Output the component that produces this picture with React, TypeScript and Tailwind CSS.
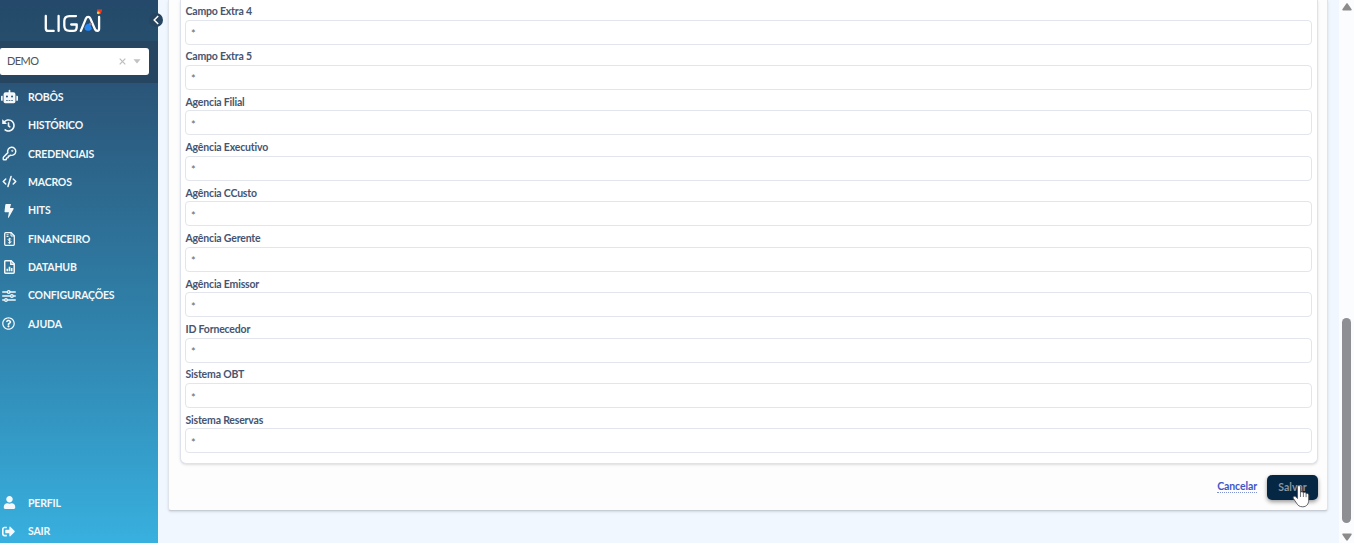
import React from "react";
import {
  FaRobot,
  FaHistory,
  FaRegQuestionCircle,
  FaUser,
  FaSignOutAlt,
} from "react-icons/fa";
import { KeyRound, CodeXml } from "lucide-react";

interface MenuItemProps {
  label: string;
  icon: React.ReactNode;
}

const BoltIcon = () => (
  <svg width="10" height="14" viewBox="0 0 10 14" fill="currentColor">
    <path d="M2.2 0h4.8L6 4h3c.6 0 .8.5.6.9L4.800 13.600c-.3.5-.9.2-.8-.3L4.900 8.200H1.200c-.5 0-.8-.4-.7-.8L1.300.7C1.400.2 1.700 0 2.200 0Z" />
  </svg>
);

const InvoiceIcon = () => (
  <svg
    width="11"
    height="14"
    viewBox="0 0 11 14"
    fill="none"
    stroke="currentColor"
    strokeWidth="1.3"
  >
    <path d="M1.700.7h5.500l3.100 3.100v8.500c0 .6-.4 1-1 1H1.700c-.6 0-1-.4-1-1V1.700c0-.6.4-1 1-1Z" />
    <path d="M7 .7V4h3.300M2.500 2.800h2M2.500 4.500h2" strokeWidth="1" />
    <path
      d="M7.200 7.200C6.800 6.700 4 6.400 4 7.700s3.200.8 3.200 2.100S4.300 11 3.900 10.400M5.600 5.800v6"
      strokeWidth="1"
    />
  </svg>
);

const ChartFileIcon = () => (
  <svg
    width="11"
    height="14"
    viewBox="0 0 11 14"
    fill="none"
    stroke="currentColor"
    strokeWidth="1.5"
  >
    <path d="M1.700.8h5.500l3 3v8.400c0 .6-.4 1-1 1H1.700c-.6 0-1-.4-1-1V1.800c0-.6.4-1 1-1Z" />
    <path d="M6.800.8V4.200h3.300" strokeWidth="1.400" />
    <path d="M3.300 11.200V8.700M5.500 11.200V6.800M7.700 11.200V8" strokeWidth="1.600" />
  </svg>
);

const SlidersIcon = () => (
  <svg
    width="14"
    height="12"
    viewBox="0 0 14 12"
    fill="none"
    stroke="currentColor"
    strokeWidth="1.300"
    strokeLinecap="round"
  >
    <path d="M.7 2h4.600M8.200 2h5.100M.7 6h7.600M11.400 6h1.900M.7 10h1.800M5.400 10h7.900" />
    <circle cx="6.700" cy="2" r="1.300" />
    <circle cx="9.900" cy="6" r="1.300" />
    <circle cx="4" cy="10" r="1.300" />
  </svg>
);

const Logo = () => (
  <svg width="60" height="28" viewBox="0 0 60 28" fill="none">
    <g
      stroke="#fff"
      strokeWidth="2.300"
      strokeLinecap="round"
      strokeLinejoin="round"
    >
      <path d="M2.800 9v12.400c0 1.700.8 2.500 2.500 2.500h5.400M15.600 9v14.900M33 9.100h-6.500c-3.200 0-5.200 2-5.200 5v4.700c0 3.100 2 5.100 5.200 5.100h3.500c2.300 0 3.700-1.400 3.700-3.700v-2.700h-5.500" />
      <path d="M37.800 23.900l5.200-12.500c.9-2.100 3.400-2.100 4.300 0L52 22.300c.9 2 4.100 2.200 4.100-.6V10" />
    </g>
    <path
      d="M41.500 20.500c.5-2.500 3-4.300 5.400-3.600l2 5c-2.300 2.600-5.400 2.300-7 .5Z"
      fill="#2587f4"
    />
    <circle cx="47.500" cy="17" r="1.500" fill="#8a7c95" />
    <path d="M54 2.500h5.200L57.800 7H54Z" fill="#ee3a24" />
    <circle cx="55.300" cy="5.800" r="1.400" fill="#fbc62f" />
  </svg>
);

const MenuItem: React.FC<MenuItemProps> = ({ label, icon }) => (
  <a className="flex h-[28.35px] items-center text-[10.5px] font-bold text-[#f4f8fa]">
    <span className="flex w-[28px] shrink-0 items-center pl-[2px]">{icon}</span>
    <span className="pt-[1.5px] tracking-[-0.18px]">{label}</span>
  </a>
);

const menu: MenuItemProps[] = [
  { label: "ROBÔS", icon: <FaRobot size={17} className="-mt-[1px] -ml-[1.5px]" /> },
  { label: "HISTÓRICO", icon: <FaHistory size={13} /> },
  { label: "CREDENCIAIS", icon: <KeyRound size={15} strokeWidth={2.3} className="-ml-[0.500px]" /> },
  { label: "MACROS", icon: <CodeXml size={15} strokeWidth={2.5} className="-mt-[1px] -ml-[0.500px]" /> },
  { label: "HITS", icon: <span className="pl-[2px]"><BoltIcon /></span> },
  { label: "FINANCEIRO", icon: <span className="pl-[1.500px]"><InvoiceIcon /></span> },
  { label: "DATAHUB", icon: <span className="pl-[1.500px]"><ChartFileIcon /></span> },
  { label: "CONFIGURAÇÕES", icon: <SlidersIcon /> },
  { label: "AJUDA", icon: <FaRegQuestionCircle size={13} /> },
];

const fields = [
  "Campo Extra 4",
  "Campo Extra 5",
  "Agencia Filial",
  "Agência Executivo",
  "Agência CCusto",
  "Agência Gerente",
  "Agência Emissor",
  "ID Fornecedor",
  "Sistema OBT",
  "Sistema Reservas",
];

const Field: React.FC<{ label: string }> = ({ label }) => (
  <div className="h-[45.45px]">
    <div className="flex h-[17px] items-center pt-[1.5px] pl-[0.5px] text-[10.5px] font-bold tracking-[-0.19px] text-[#465571]">
      {label}
    </div>
    <div className="flex h-[25px] items-center rounded-[4px] border border-[#e2e5eb] bg-white px-[5px] pt-[3px] text-[11px] leading-none text-[#5b6472]">
      *
    </div>
  </div>
);

const Sidebar = () => (
  <aside className="relative flex w-[158px] shrink-0 flex-col bg-[#264561]">
    <div className="flex h-[41px] items-center bg-linear-to-b from-[#24496a] to-[#264e6c] pl-[43px]">
      <Logo />
    </div>
    <button className="absolute top-[13px] left-[149px] z-10 flex size-[14px] items-center justify-center rounded-full bg-[#264561]">
      <svg width="6" height="10" viewBox="0 0 6 10" fill="none" stroke="#fff" strokeWidth="1.500">
        <path d="M5.200 1 1.200 5l4 4" />
      </svg>
    </button>
    <div className="h-[42px] pt-[7px] pr-[9px]">
      <div className="flex h-[27px] items-center rounded-r-[3px] rounded-l-[2px] bg-white pl-[7px] text-[11px] text-[#4f5358]">
        <span className="flex-1 tracking-[-0.6px]">DEMO</span>
        <svg width="7" height="7" viewBox="0 0 7 7" stroke="#bdbdbd" strokeWidth="1.200">
          <path d="M.7.7l5.600 5.600M6.300.7.7 6.300" />
        </svg>
        <svg className="mr-[8px] ml-[7px]" width="8" height="5" viewBox="0 0 8 5" fill="#c2c2c2">
          <path d="M.5.3h7L4 4.500Z" />
        </svg>
      </div>
    </div>
    <nav className="flex flex-1 flex-col justify-between bg-linear-to-b from-[#2a5578] via-[#2f80a9] to-[#38b0df]">
      <div>
        {menu.map((item) => (
          <MenuItem key={item.label} {...item} />
        ))}
      </div>
      <div className="-mb-[2.5px]">
        <MenuItem label="PERFIL" icon={<span className="pl-[1px]"><FaUser size={13} /></span>} />
        <MenuItem label="SAIR" icon={<FaSignOutAlt size={13} />} />
      </div>
    </nav>
  </aside>
);

const Pointer = () => (
  <svg
    className="absolute top-[9px] left-[25px]"
    width="19"
    height="24"
    viewBox="0 0 19 24"
    fill="#fff"
    stroke="#4f545a"
    strokeWidth="0.900"
    strokeLinejoin="round"
  >
    <path d="M5.500 14.500V3.200c0-2.200 3-2.200 3 0v5.300c.5-1.200 2.700-1 2.900.4.800-1 2.500-.6 2.700.8 1-.7 2.600-.2 2.600 1.400v5c0 4-2.200 6.700-6 6.700-3.200 0-4.700-1.300-6.200-3.700L1.400 14.500c-.9-1.700 1-2.900 2.300-1.700Z" />
    <path d="M8.500 8.500v4.500M11.400 9v4M14.100 9.800v3.400" strokeWidth=".8" />
  </svg>
);

const App: React.FC = () => (
  <div className="flex h-[543px] w-full overflow-hidden bg-[#f1f7fe] font-['Lato',sans-serif]">
    <Sidebar />
    <main className="flex-1 pl-[10px]">
      <div className="h-[511px] w-[1160px] rounded-b-[3px] border border-t-0 border-[#e0e5ec] border-b-[#c7cdd4] bg-[#fdfdfe] pr-[9px] pl-[11px] shadow-sm">
        <section className="h-[464px] rounded-b-[6px] border border-t-0 border-[#dde2ec] bg-white pt-[2.500px] pr-[5px] pl-[4px] shadow-sm">
          {fields.map((label) => (
            <Field key={label} label={label} />
          ))}
        </section>
        <div className="mt-[10.500px] flex items-center justify-end">
          <a className="mr-[10px] -mt-[1px] border-b border-dotted border-[#7d90d8] text-[10.500px] leading-[12px] font-bold tracking-[-0.1px] text-[#3d57c6]">
            Cancelar
          </a>
          <button className="relative h-[25px] w-[51px] rounded-[5px] bg-[#062743] pt-[2px] text-[10.500px] font-bold text-[#8795a1] shadow-[0_2px_4px_rgba(0,0,0,0.4)]">
            Salvar
            <Pointer />
          </button>
        </div>
      </div>
    </main>
    <div className="flex w-[15px] shrink-0 flex-col items-center bg-[#fbfcfe]">
      <svg className="mt-[3px]" width="10" height="8" viewBox="0 0 10 8" fill="#8b8b8b">
        <path d="M4.200.8.4 6.300c-.3.500 0 1.200.6 1.200h8c.6 0 .9-.7.6-1.200L5.800.8c-.4-.6-1.200-.6-1.600 0Z" />
      </svg>
      <div className="mt-[307px] h-[205px] w-[9px] rounded-full bg-[#8d8f92]" />
      <svg className="mt-[10px]" width="10" height="8" viewBox="0 0 10 8" fill="#8b8b8b">
        <path d="M4.200 7.200.4 1.700C.1 1.200.4.500 1 .5h8c.6 0 .9.7.6 1.200L5.800 7.200c-.4.6-1.200.6-1.600 0Z" />
      </svg>
    </div>
  </div>
);

export default App;
